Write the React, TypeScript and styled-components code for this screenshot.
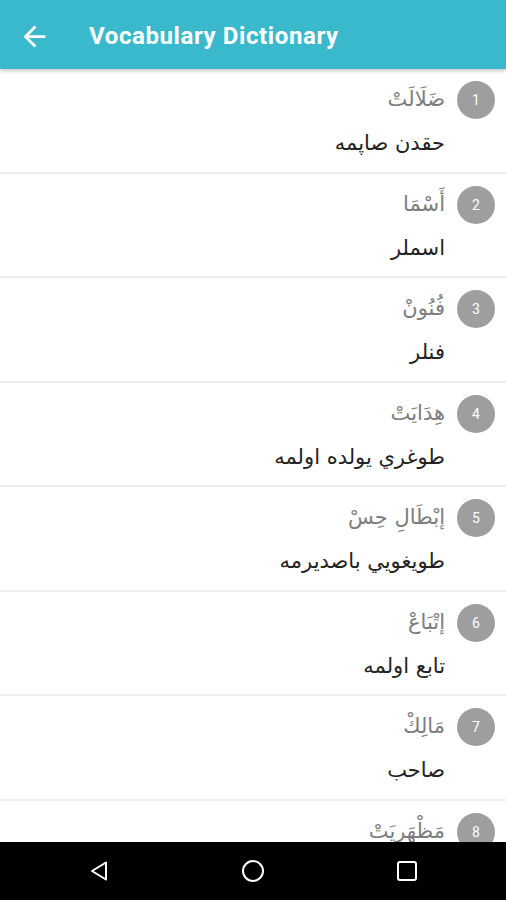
import React from 'react';
import styled, {createGlobalStyle} from 'styled-components';

const GlobalStyle = createGlobalStyle`
  html, body {
    margin: 0;
    padding: 0;
    background: #ffffff;
  }
  body {
    font-family: Roboto, "Liberation Sans", sans-serif;
  }
`;

const words = [
    {word: 'ضَلَالَتْ', meaning: 'حقدن صاپمه'},
    {word: 'أَسْمَا', meaning: 'اسملر'},
    {word: 'فُنُونْ', meaning: 'فنلر'},
    {word: 'هِدَايَتْ', meaning: 'طوغري يولده اولمه'},
    {word: 'إبْطَالِ حِسْ', meaning: 'طويغويي باصديرمه'},
    {word: 'إتْبَاعْ', meaning: 'تابع اولمه'},
    {word: 'مَالِكْ', meaning: 'صاحب'},
    {word: 'مَظْهَرِيَتْ', meaning: 'مظهر اولمه'},
];

const Screen = styled.div`
  display: flex;
  flex-direction: column;
  width: 506px;
  height: 900px;
  overflow: hidden;
`;

const AppBar = styled.header`
  position: relative;
  z-index: 2;
  display: flex;
  align-items: center;
  flex: 0 0 69px;
  box-sizing: border-box;
  padding: 3px 0 0 18px;
  background: #3bb9cc;
  box-shadow: 0 2px 4px rgba(0, 0, 0, 0.22);
`;

const BackButton = styled.svg`
  width: 33px;
  height: 33px;
  fill: #ffffff;
`;

const Title = styled.h1`
  margin: 0 0 0 38px;
  font-family: Roboto, "Liberation Sans", sans-serif;
  font-size: 24px;
  font-weight: 700;
  color: #ffffff;
  letter-spacing: 0.6px;
`;

const List = styled.ul`
  flex: 1;
  margin: 0;
  padding: 0;
  list-style: none;
  overflow: hidden;
`;

const Row = styled.li`
  box-sizing: border-box;
  display: flex;
  flex-direction: row-reverse;
  align-items: flex-start;
  height: 104.5px;
  padding: 12px 11px 0 0;
  border-bottom: 2px solid #eeeeee;
`;

const Badge = styled.div`
  display: flex;
  align-items: center;
  justify-content: center;
  flex: 0 0 38px;
  height: 38px;
  border-radius: 50%;
  background: #9e9e9e;
  color: #ffffff;
  font-family: Roboto, "Liberation Sans", sans-serif;
  font-size: 14px;
`;

const TextCol = styled.div`
  display: flex;
  flex-direction: column;
  align-items: flex-start;
  margin-right: 12px;
  direction: rtl;
`;

const Word = styled.div`
  font-family: "DejaVu Sans", "Noto Sans", sans-serif;
  font-size: 21px;
  line-height: 36px;
  color: #7d7d7d;
`;

const Meaning = styled.div`
  margin-top: 8px;
  font-family: "DejaVu Sans", "Noto Sans", sans-serif;
  font-size: 21px;
  line-height: 36px;
  color: #222222;
`;

const NavBar = styled.nav`
  display: flex;
  align-items: center;
  justify-content: center;
  gap: 130px;
  flex: 0 0 58px;
  background: #000000;
`;

const NavIcon = styled.svg`
  width: 24px;
  height: 24px;
  fill: none;
  stroke: #ffffff;
  stroke-width: 2;
`;

const App: React.FunctionComponent = () => {
    return (
        <Screen>
            <GlobalStyle/>
            <AppBar>
                <BackButton viewBox="0 0 24 24">
                    <path d="M20 11H7.83l5.59-5.59L12 4l-8 8 8 8 1.41-1.41L7.83 13H20v-2z"/>
                </BackButton>
                <Title>Vocabulary Dictionary</Title>
            </AppBar>
            <List>
                {words.map((item, i) => (
                    <Row key={i}>
                        <Badge>{i + 1}</Badge>
                        <TextCol>
                            <Word>{item.word}</Word>
                            <Meaning>{item.meaning}</Meaning>
                        </TextCol>
                    </Row>
                ))}
            </List>
            <NavBar>
                <NavIcon viewBox="0 0 24 24">
                    <path d="M19 3.5 L5 12 L19 20.5 Z" strokeLinejoin="round"/>
                </NavIcon>
                <NavIcon viewBox="0 0 24 24">
                    <circle cx="12" cy="12" r="10"/>
                </NavIcon>
                <NavIcon viewBox="0 0 24 24">
                    <rect x="3" y="3" width="18" height="18" rx="2"/>
                </NavIcon>
            </NavBar>
        </Screen>
    );
};

export default App;
